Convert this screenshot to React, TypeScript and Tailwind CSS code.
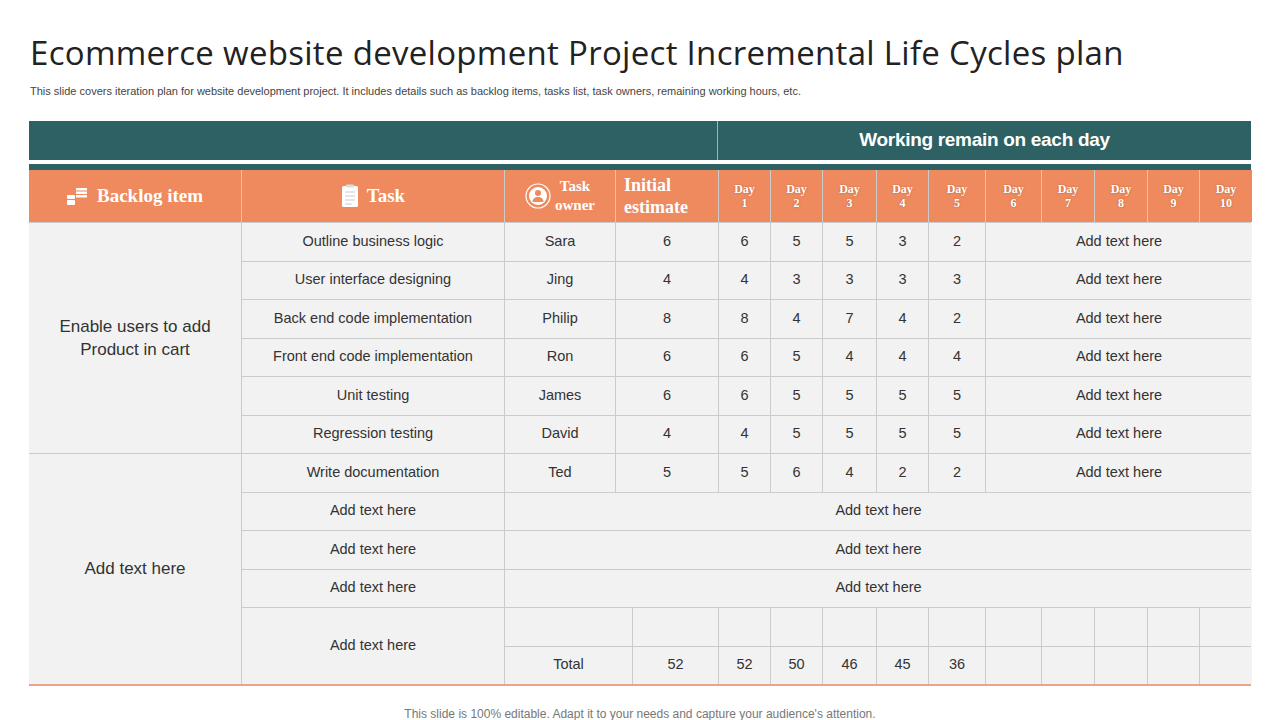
import React from "react";

const cell = "bg-[#f2f2f2] flex items-center justify-center text-center text-[14.5px] text-[#333]";
const hd = "bg-[#ee8a5e] flex items-center justify-center text-white";

const tasks = [
  ["Outline business logic", "Sara", "6", ["6", "5", "5", "3", "2"]],
  ["User interface designing", "Jing", "4", ["4", "3", "3", "3", "3"]],
  ["Back end code implementation", "Philip", "8", ["8", "4", "7", "4", "2"]],
  ["Front end code implementation", "Ron", "6", ["6", "5", "4", "4", "4"]],
  ["Unit testing", "James", "6", ["6", "5", "5", "5", "5"]],
  ["Regression testing", "David", "4", ["4", "5", "5", "5", "5"]],
  ["Write documentation", "Ted", "5", ["5", "6", "4", "2", "2"]],
] as const;

function BacklogIcon() {
  return (
    <svg width="22" height="20" viewBox="0 0 22 20" fill="white">
      <rect x="0" y="9" width="8" height="4" rx="1" />
      <rect x="0" y="14" width="8" height="5" rx="1" />
      <rect x="9" y="2" width="11" height="2.5" />
      <rect x="9" y="5.5" width="11" height="2.5" />
      <rect x="9" y="9" width="11" height="2.5" />
    </svg>
  );
}
function TaskIcon() {
  return (
    <svg width="18" height="24" viewBox="0 0 18 24">
      <rect x="1" y="2" width="16" height="21" rx="1.5" fill="white" />
      <rect x="5" y="0.5" width="8" height="3" rx="1" fill="#ddd" />
      <path d="M4 8h10M4 12h10M4 16h10M4 20h7" stroke="#ccc" strokeWidth="1" />
    </svg>
  );
}
function OwnerIcon() {
  return (
    <svg width="26" height="26" viewBox="0 0 26 26" fill="none">
      <circle cx="13" cy="13" r="12" stroke="white" strokeWidth="1.2" />
      <circle cx="13" cy="13" r="9" fill="white" />
      <circle cx="13" cy="10" r="3" fill="#ee8a5e" />
      <path d="M7.5 19c0-3.5 2.5-5 5.5-5s5.5 1.5 5.5 5z" fill="#ee8a5e" />
    </svg>
  );
}

export default function App() {
  const serif = { fontFamily: '"Liberation Serif", serif' };
  return (
    <div className="w-[1280px] h-[720px] bg-white relative overflow-hidden" style={{ fontFamily: '"Liberation Sans", Arial, sans-serif' }}>
      <h1 className="absolute left-[30px] top-[28px] text-[33px] text-[#222] tracking-[0.3px]" style={{ fontFamily: '"Open Sans", sans-serif' }}>
        Ecommerce website development Project Incremental Life Cycles plan
      </h1>
      <p className="absolute left-[30px] top-[83px] text-[11px] text-[#444]">
        This slide covers iteration plan for website development project. It includes details such as backlog items, tasks list, task owners, remaining working hours, etc.
      </p>

      <div className="absolute left-[29px] top-[121px] w-[1222px]">
        <div className="flex h-[39px] bg-[#2e6163]">
          <div className="w-[689px] border-r border-[#9db5b6]" />
          <div className="flex-1 flex items-center justify-center text-white text-[19px] font-bold tracking-[-0.3px]">Working remain on each day</div>
        </div>
        <div className="h-[4px] bg-white" />
        <div className="h-[6px] bg-[#2e6163]" />
        <div className="grid gap-px bg-[#cbcbcb] grid-cols-[212px_262px_110px_16px_85px_51px_51px_53px_51px_56px_55px_52px_52px_51px_52px] grid-rows-[52px_repeat(12,37.5px)] border-b-2 border-[#e8a58a]">
          <div className={hd + " col-span-1 gap-2 text-[19px] font-bold"} style={serif}><BacklogIcon />Backlog item</div>
          <div className={hd + " gap-2 text-[19px] font-bold"} style={serif}><TaskIcon />Task</div>
          <div className={hd + " gap-1"} style={serif}><OwnerIcon /><div className="text-[15px] font-bold leading-[19px] text-center">Task<br />owner</div></div>
          <div className={hd + " col-span-2 !justify-start pl-2 text-[18px] font-bold leading-[22px]"} style={serif}>Initial<br />estimate</div>
          {Array.from({ length: 10 }, (_, i) => (
            <div key={i} className={hd + " !items-start pt-[12px] text-[12px] font-bold leading-[14px] text-center"} style={{ ...serif, textShadow: "0 0 2px #b5603c" }}>
              Day<br />{i + 1}
            </div>
          ))}

          <div className={cell + " row-span-6 text-[17px] leading-[23px]"}>Enable users to add<br />Product in cart</div>
          {tasks.map((t, i) => (
            <React.Fragment key={i}>
              {i === 6 && <div className={cell + " row-span-6 text-[17px]"}>Add text here</div>}
              <div className={cell}>{t[0]}</div>
              <div className={cell}>{t[1]}</div>
              <div className={cell + " col-span-2"}>{t[2]}</div>
              {t[3].map((d, j) => <div key={j} className={cell}>{d}</div>)}
              <div className={cell + " col-span-5"}>Add text here</div>
            </React.Fragment>
          ))}
          {[0, 1, 2].map((i) => (
            <React.Fragment key={"a" + i}>
              <div className={cell}>Add text here</div>
              <div className={cell + " col-span-13"}>Add text here</div>
            </React.Fragment>
          ))}
          <div className={cell + " row-span-2"}>Add text here</div>
          <div className={cell + " col-span-2"} />
          {Array.from({ length: 11 }, (_, i) => <div key={"b" + i} className={cell} />)}
          <div className={cell + " col-span-2"}>Total</div>
          {["52", "52", "50", "46", "45", "36", "", "", "", "", ""].map((v, i) => <div key={"c" + i} className={cell}>{v}</div>)}
        </div>
      </div>

      <p className="absolute left-0 right-0 top-[705px] text-center text-[12px] text-[#777]">
        This slide is 100% editable. Adapt it to your needs and capture your audience's attention.
      </p>
    </div>
  );
}
